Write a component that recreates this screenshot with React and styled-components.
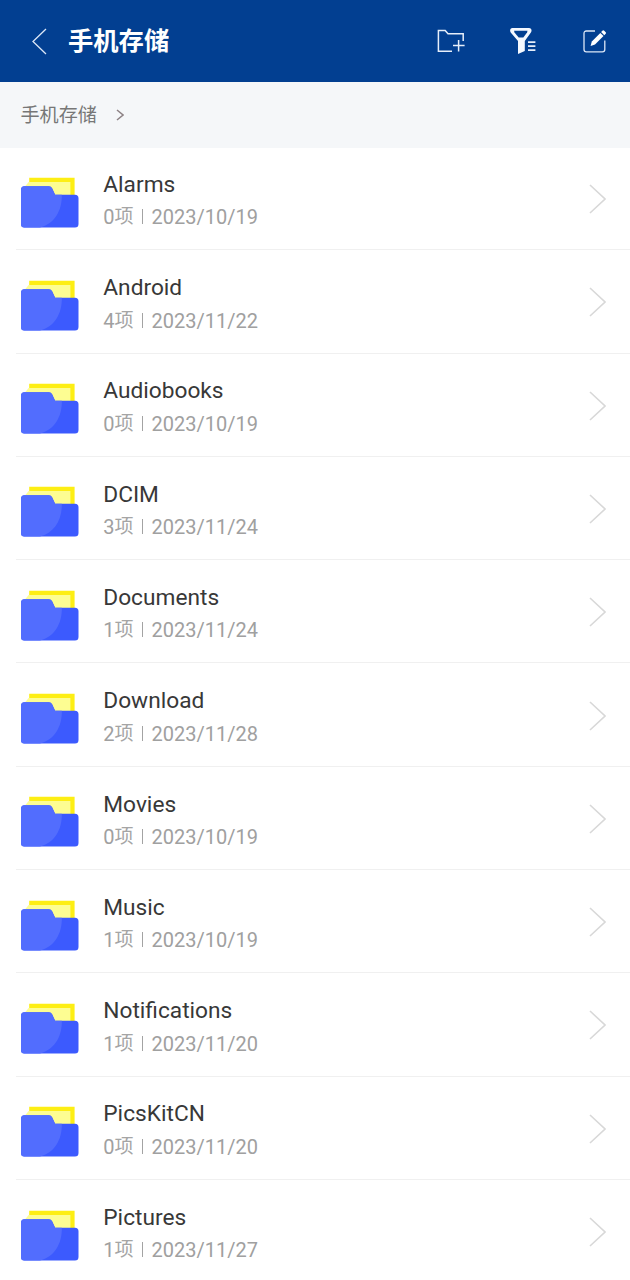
import React from 'react'
import styled, { createGlobalStyle } from 'styled-components'

const folders = [
  { name: 'Alarms', count: 0, date: '2023/10/19' },
  { name: 'Android', count: 4, date: '2023/11/22' },
  { name: 'Audiobooks', count: 0, date: '2023/10/19' },
  { name: 'DCIM', count: 3, date: '2023/11/24' },
  { name: 'Documents', count: 1, date: '2023/11/24' },
  { name: 'Download', count: 2, date: '2023/11/28' },
  { name: 'Movies', count: 0, date: '2023/10/19' },
  { name: 'Music', count: 1, date: '2023/10/19' },
  { name: 'Notifications', count: 1, date: '2023/11/20' },
  { name: 'PicsKitCN', count: 0, date: '2023/11/20' },
  { name: 'Pictures', count: 1, date: '2023/11/27' },
]

const Chevron = ({ width, height, color, stroke, left }) => (
  <svg width={width} height={height} viewBox={`0 0 ${width} ${height}`} fill="none" stroke={color} strokeWidth={stroke}>
    <path d={left ? `M${width - 1} 1L1 ${height / 2}L${width - 1} ${height - 1}` : `M1 1L${width - 1} ${height / 2}L1 ${height - 1}`} />
  </svg>
)

const NewFolderIcon = () => (
  <svg width="28" height="24" viewBox="0 0 28 24" fill="none" stroke="#e6eefa" strokeWidth="1.5">
    <path d="M15 22.2H1.4V1.5H8.2L11 4.7H26.2V12" />
    <path d="M16 16.6H27.6M21.6 11V22.4" />
  </svg>
)

const FilterIcon = () => (
  <svg width="28" height="28" viewBox="0 0 28 28" fill="none">
    <path d="M2.4 1H19C21.5 1 22.2 3.5 20.9 5.4L14.8 14V24L8 27V14L.7 5.4C-.5 3.5 0.2 1 2.4 1Z" fill="#f4f8ff" />
    <path d="M4.1 3.8H17.5L17.1 5.6L13.3 10.6H8.7L4.5 5.6Z" fill="#023f91" />
    <path d="M18 15.2H25.4M18 19.2H25.4M18 23.2H25.4" stroke="#e6eefa" strokeWidth="1.7" />
  </svg>
)

const EditIcon = () => (
  <svg width="24" height="24" viewBox="0 0 24 24" fill="none">
    <path d="M12 2H3.4Q1 2 1 4.4V20.4Q1 22.8 3.4 22.8H19.4Q21.8 22.8 21.8 20.4V11.5" stroke="#dce7f7" strokeWidth="1.3" />
    <path d="M7.6 17L8.8 12.4L17.3 3.9L20.5 7.1L12 15.6Z" fill="#fff" />
    <path d="M18.1 3.1L19.7 1.5Q20.5 1 21.2 1.7L22.7 3.2Q23.4 4 22.7 4.8L21.3 6.3Z" fill="#fff" />
  </svg>
)

const FolderIcon = () => (
  <svg width="58" height="52" viewBox="0 0 58 52">
    <path d="M8.2.7H53.6V35H8.2Z" fill="#fdee14" />
    <path d="M3.6 10L7.6 5H49.4V32H3.6Z" fill="#fdfd92" />
    <path d="M3.3 9.2H27.8Q30.1 9.2 31.1 11.3L34.1 17.7H54Q57.5 17.7 57.5 21.2V47Q57.5 50.5 54 50.5H3.3Q0 50.5 0 47V12.7Q0 9.2 3.3 9.2Z" fill="#3c5afe" />
    <path d="M3.3 9.2H27.8Q30.1 9.2 31.1 11.3L34.1 17.7H40.8C41.3 34 33 47 19 50.5H3.3Q0 50.5 0 47V12.7Q0 9.2 3.3 9.2Z" fill="#526dfe" />
  </svg>
)

const App = () => {
  return (
    <Wrapper>
      <GlobalStyle />
      <Header>
        <Chevron left width={15} height={27} color="#dce7f7" stroke={1.3} />
        <h1>手机存储</h1>
        <Actions>
          <NewFolderIcon />
          <FilterIcon />
          <EditIcon />
        </Actions>
      </Header>
      <Breadcrumb>
        <span>手机存储</span>
        <Chevron width={8} height={12} color="#8d8285" stroke={1.5} />
      </Breadcrumb>
      <List>
        {folders.map(({ name, count, date }) => (
          <Row key={name}>
            <FolderIcon />
            <Info>
              <Name>{name}</Name>
              <Meta>
                {count}
                <span className="unit">项</span>
                <span className="bar" />
                {date}
              </Meta>
            </Info>
            <Chevron width={17} height={30} color="#d8d8d8" stroke={1.6} />
          </Row>
        ))}
      </List>
    </Wrapper>
  )
}

const GlobalStyle = createGlobalStyle`
  * {
    box-sizing: border-box;
  }
  body {
    margin: 0;
    background: #fff;
  }
`
const Wrapper = styled.div`
  height: 1280px;
  overflow: hidden;
  font-family: Roboto, "Noto Sans CJK SC", sans-serif;
  svg {
    display: block;
    flex: none;
  }
`
const Header = styled.header`
  display: flex;
  align-items: center;
  height: 82px;
  padding: 0 23.4px 0 32px;
  background: #023f91;
  h1 {
    margin: 0 0 0 21px;
    padding-top: 2px;
    font-size: 25.3px;
    line-height: 36px;
    font-weight: 700;
    color: #fff;
  }
`
const Actions = styled.div`
  display: flex;
  align-items: center;
  gap: 44.8px;
  margin-left: auto;
`
const Breadcrumb = styled.nav`
  display: flex;
  align-items: center;
  gap: 19.5px;
  height: 66px;
  padding-left: 20.5px;
  background: #f5f7f9;
  font-size: 19.1px;
  color: #777;
  span {
    padding-bottom: 2px;
  }
`
const List = styled.div`
  margin-top: -1.1px;
  padding-left: 16px;
`
const Row = styled.div`
  display: flex;
  align-items: center;
  height: 103.3px;
  padding: 2px 24.4px 0 4.5px;
  border-bottom: 1px solid #f0f0f0;
  & > svg:first-child {
    margin-top: 7px;
  }
`
const Info = styled.div`
  flex: 1;
  margin-left: 24.8px;
  padding-top: 3.5px;
`
const Name = styled.div`
  font-size: 22.7px;
  line-height: 33px;
  color: #383838;
`
const Meta = styled.div`
  display: flex;
  align-items: center;
  height: 33px;
  font-size: 20px;
  color: #a0a0a0;
  .unit {
    font-size: 19px;
    line-height: 26px;
    color: #a5a5a5;
  }
  .bar {
    width: 1.5px;
    height: 15px;
    margin: 0 8.4px 1px 8px;
    background: #a3a3a3;
  }
`
export default App
